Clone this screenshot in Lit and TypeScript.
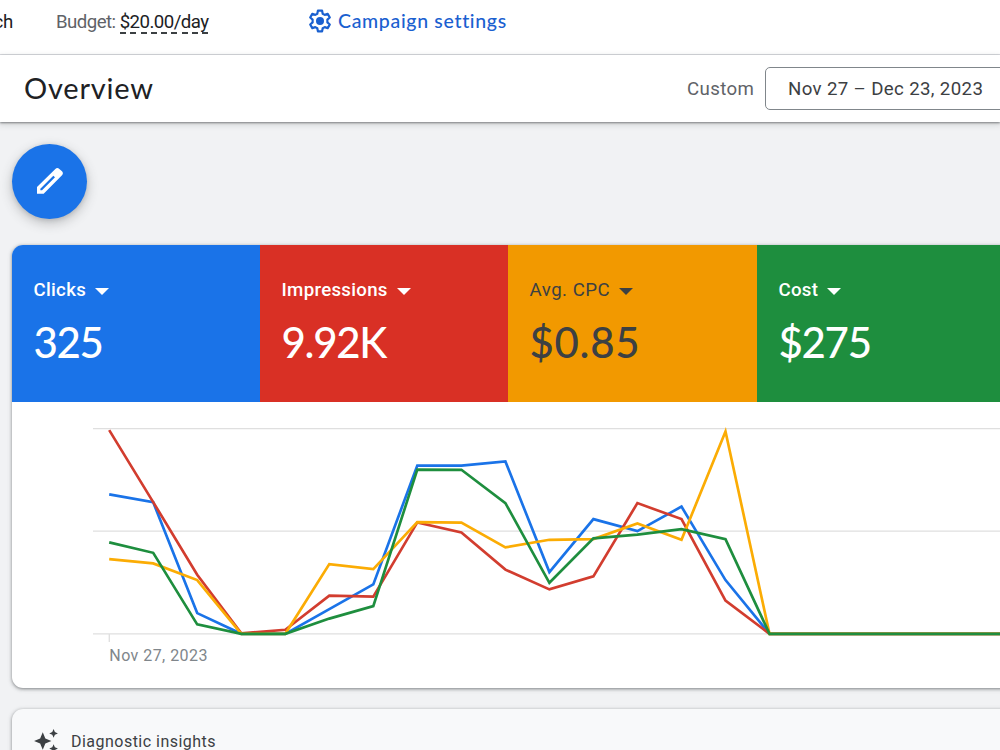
import { LitElement, html, svg, css } from "lit";
import { customElement, property } from "lit/decorators.js";

interface Metric {
	label: string;
	value: string;
	tone: string;
}

interface Series {
	tone: string;
	points: number[];
}

const METRICS: Metric[] = [
	{ label: "Clicks", value: "325", tone: "blue" },
	{ label: "Impressions", value: "9.92K", tone: "red" },
	{ label: "Avg. CPC", value: "$0.85", tone: "yellow" },
	{ label: "Cost", value: "$275", tone: "green" },
];

// heights above the baseline, one per day
const SERIES: Series[] = [
	{
		tone: "blue",
		points: [139.4, 131.5, 20.7, 0, 0, 24.7, 49.4, 168.2, 168.2, 172.4, 61.7, 114.7, 102.7, 127.2, 53.7, 0],
	},
	{
		tone: "red",
		points: [203.7, 131.7, 59, 0.5, 4, 38.2, 37.2, 111.4, 101.4, 64.2, 44.4, 57.4, 130.7, 114.7, 33.2, 0],
	},
	{
		tone: "yellow",
		points: [74.7, 70.4, 53.7, 0, 0, 69.7, 64.7, 111.7, 111.2, 86.4, 94, 94.7, 110.4, 94, 202.4, 0],
	},
	{
		tone: "green",
		points: [91.4, 81, 9.4, 0, 0, 15.2, 27.7, 164.2, 164, 130.7, 51, 95.4, 99.2, 104.7, 94.7, 0],
	},
];

@customElement("metric-card")
export class MetricCard extends LitElement {
	static styles = css`
		:host {
			display: block;
			box-sizing: border-box;
			padding: 32px 22px 0 21.5px;
			color: #fff;
			font-family: Roboto, sans-serif;
		}

		.label {
			display: flex;
			align-items: center;
			height: 25px;
			gap: 9px;
			font-size: 18.67px;
			font-weight: 500;
			letter-spacing: 0.3px;
			white-space: nowrap;
		}

		.arrow {
			width: 14px;
			height: 7px;
			margin-top: 4px;
			fill: currentColor;
		}

		.value {
			margin-top: 13px;
			font-family: Lato, sans-serif;
			font-size: 42px;
			font-weight: 500;
			line-height: 54px;
			letter-spacing: -1.3px;
			white-space: nowrap;
		}

		:host([tone="yellow"]) {
			color: #3c4043;
		}

		:host([tone="yellow"]) .label {
			font-weight: 400;
			letter-spacing: 0.5px;
		}

		:host([tone="yellow"]) .value {
			letter-spacing: 0.7px;
		}
	`;

	@property() label = "";
	@property() value = "";

	render() {
		return html`
			<div class="label">
				<span>${this.label}</span>
				<svg class="arrow" viewBox="0 0 14 7"><path d="M0 0H14L7 7Z" /></svg>
			</div>
			<div class="value">${this.value}</div>
		`;
	}
}

@customElement("performance-chart")
export class PerformanceChart extends LitElement {
	static styles = css`
		:host {
			display: block;
		}

		svg {
			display: block;
		}

		.grid {
			stroke: #dfdfdf;
			stroke-width: 1.33;
		}

		.line {
			fill: none;
			stroke-width: 2.67;
		}

		.blue {
			stroke: #1a73e8;
		}

		.red {
			stroke: #d23d2f;
		}

		.yellow {
			stroke: #fbac04;
		}

		.green {
			stroke: #1e8e3e;
		}

		.tick {
			fill: #80868b;
			font-family: Roboto, sans-serif;
			font-size: 16px;
			letter-spacing: 0.45px;
		}
	`;

	private path(points: number[]) {
		const coords = points.map((p, i) => `${(97.2 + i * 44.02).toFixed(1)},${(231.8 - p).toFixed(1)}`);
		return coords.join(" ") + " 1300,231.8";
	}

	render() {
		return html`
			<svg width="1280" height="286" viewBox="0 0 1280 286">
				${[26.6, 129.2, 231.8].map((y) => svg`<line class="grid" x1="81" x2="1280" y1=${y} y2=${y} />`)}
				<line class="grid" x1="97.3" x2="97.3" y1="232" y2="240" />
				${SERIES.map((s) => svg`<polyline class="line ${s.tone}" points=${this.path(s.points)} />`)}
				<text class="tick" x="97.3" y="259">Nov 27, 2023</text>
			</svg>
		`;
	}
}

@customElement("app-root")
export class AppRoot extends LitElement {
	static styles = css`
		:host {
			display: flex;
			flex-direction: column;
			width: 100vw;
			height: 100vh;
			overflow: hidden;
			background: #f1f2f4;
			color: #202124;
			font-family: Roboto, sans-serif;
			font-size: 18.67px;
		}

		.topbar {
			display: flex;
			flex: none;
			box-sizing: border-box;
			height: 55px;
			padding-bottom: 11px;
			align-items: center;
			background: #fff;
			border-bottom: 1px solid #dadce0;
			white-space: nowrap;
		}

		.type {
			display: flex;
			justify-content: flex-end;
			width: 13px;
			margin-right: 43px;
			letter-spacing: -0.3px;
		}

		.budget {
			width: 251.5px;
			padding-top: 1px;
			color: #5f6368;
			letter-spacing: -0.55px;
		}

		.amount {
			display: inline-block;
			height: 23px;
			line-height: 22px;
			color: #202124;
			background: repeating-linear-gradient(90deg, #3c4043 0 6px, transparent 6px 10.3px) bottom / 100% 2px no-repeat;
		}

		.settings {
			display: flex;
			align-items: center;
			gap: 6.5px;
			color: #1a60d0;
			font-family: Lato, sans-serif;
			font-size: 19.5px;
			font-weight: 500;
			line-height: 22px;
			letter-spacing: 0.67px;
		}

		.settings span {
			margin-top: -2px;
		}

		.settings svg {
			width: 24px;
			height: 24px;
			margin-top: -1px;
		}

		.titlebar {
			display: flex;
			flex: none;
			height: 67px;
			padding-left: 24px;
			align-items: center;
			background: #fff;
			box-shadow: 0 1px 2px rgba(60, 64, 67, 0.6), 0 2px 6px 1px rgba(60, 64, 67, 0.15);
			white-space: nowrap;
		}

		h1 {
			flex: none;
			width: 663px;
			margin: -2px 0 0;
			font-family: Lato, sans-serif;
			font-size: 29px;
			font-weight: 400;
			letter-spacing: 0.8px;
		}

		.custom {
			flex: none;
			width: 78px;
			color: #5f6368;
			letter-spacing: 0.4px;
		}

		.range {
			flex: none;
			box-sizing: border-box;
			width: 300px;
			height: 43px;
			padding-left: 22px;
			border: 1px solid #80868b;
			border-radius: 5px;
			line-height: 42px;
			color: #3c4043;
			letter-spacing: 0.36px;
		}

		main {
			padding: 22px 0 0 12px;
		}

		.fab {
			display: flex;
			width: 75px;
			height: 75px;
			padding: 0;
			align-items: center;
			justify-content: center;
			border: 0;
			border-radius: 50%;
			background: #1a73e8;
			box-shadow: 0 4px 12px rgba(60, 64, 67, 0.3), 0 1px 4px rgba(60, 64, 67, 0.15);
		}

		.fab svg {
			width: 26px;
			height: 26px;
			margin-bottom: 1px;
			fill: #fff;
		}

		.card {
			width: 1280px;
			border-radius: 11px;
			background: #fff;
			box-shadow: 0 1px 3px rgba(60, 64, 67, 0.5), 0 1px 4px 1px rgba(60, 64, 67, 0.15);
			overflow: hidden;
		}

		.overview {
			margin-top: 26px;
		}

		.metrics {
			display: grid;
			grid-template-columns: 248px 248px 249px 248px;
			height: 157px;
		}

		.blue {
			background: #1a73e8;
		}

		.red {
			background: #d93025;
		}

		.yellow {
			background: #f29900;
		}

		.green {
			background: #1e8e3e;
		}

		.insights {
			display: flex;
			box-sizing: border-box;
			height: 90px;
			margin-top: 21px;
			padding: 19px 0 0 21px;
			gap: 12px;
			background: #f8f9fa;
			color: #3c4043;
			font-size: 16px;
			line-height: 27px;
			letter-spacing: 0.48px;
		}

		.insights svg {
			width: 26px;
			height: 26px;
			fill: #3c4043;
		}
	`;

	render() {
		return html`
			<div class="topbar">
				<div class="type">Search</div>
				<div class="budget">Budget: <span class="amount">$20.00/day</span></div>
				<div class="settings">
					<svg viewBox="0 0 24 24" fill="none" stroke="currentColor" stroke-width="2.2" stroke-linejoin="round">
						<path
							d="M9.9 1.7h4.2l.6 3.1 2 1.1 3-1 2.1 3.6-2.4 2.1v2.8l2.4 2.1-2.1 3.6-3-1-2 1.1-.6 3.1H9.9l-.6-3.1-2-1.1-3 1-2.1-3.6 2.4-2.1v-2.8L2.2 8.5l2.1-3.6 3 1 2-1.1z"
						/>
						<circle cx="12" cy="12" r="4" fill="currentColor" stroke="none" />
					</svg>
					<span>Campaign settings</span>
				</div>
			</div>
			<div class="titlebar">
				<h1>Overview</h1>
				<div class="custom">Custom</div>
				<div class="range">Nov 27 – Dec 23, 2023</div>
			</div>
			<main>
				<button class="fab" aria-label="Edit">
					<svg viewBox="0 0 78 78">
						<path
							fill-rule="evenodd"
							d="M0 57V77H20L75 22a9 9 0 0 0 0-12L67 3a9 9 0 0 0-12 0ZM15 67H10v-5L49 23l5 5Z"
						/>
					</svg>
				</button>
				<section class="card overview">
					<div class="metrics">
						${METRICS.map(
							(m) => html`<metric-card class=${m.tone} tone=${m.tone} .label=${m.label} .value=${m.value}></metric-card>`
						)}
					</div>
					<performance-chart></performance-chart>
				</section>
				<section class="card insights">
					<svg viewBox="0 0 24 24">
						<path
							d="M9 4l2.4 5.6L17 12l-5.6 2.4L9 20l-2.4-5.6L1 12l5.6-2.4zM19 1l1.2 2.8L23 5l-2.8 1.2L19 9l-1.2-2.8L15 5l2.8-1.2zM19 15l1.2 2.8L23 19l-2.8 1.2L19 23l-1.2-2.8L15 19l2.8-1.2z"
						/>
					</svg>
					<span>Diagnostic insights</span>
				</section>
			</main>
		`;
	}
}
